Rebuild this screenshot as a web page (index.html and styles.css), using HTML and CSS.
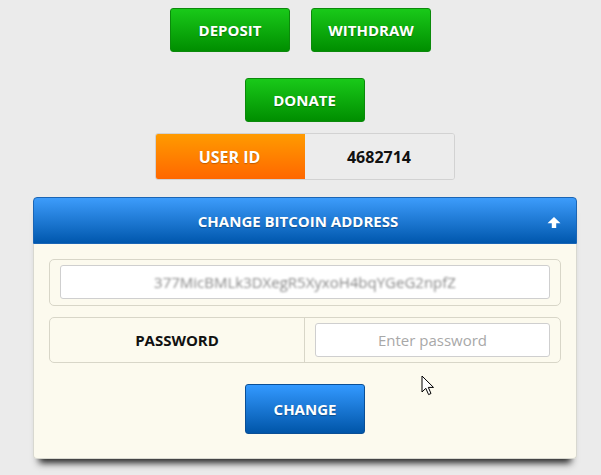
FILE: index.html
```html
<!DOCTYPE html>
<html>
<head>
<meta charset="utf-8">
<link rel="stylesheet" href="styles.css">
</head>
<body>
<div class="page">
  <div class="row top-row">
    <button class="btn green">DEPOSIT</button>
    <button class="btn green">WITHDRAW</button>
  </div>
  <div class="row donate-row">
    <button class="btn green">DONATE</button>
  </div>
  <div class="row user-row">
    <div class="userid">
      <div class="uid-label">USER ID</div>
      <div class="uid-value">4682714</div>
    </div>
  </div>
  <div class="panel">
    <div class="panel-head">
      <span class="panel-title">CHANGE BITCOIN ADDRESS</span>
      <svg class="arrow" width="14" height="11" viewBox="0 0 14 11"><path d="M7 0 L13.5 6.2 L9.2 6.2 L9.2 11 L4.8 11 L4.8 6.2 L0.5 6.2 Z" fill="#fff"/></svg>
    </div>
    <div class="panel-body">
      <div class="group">
        <div class="field addr"><span class="blurred">377MicBMLk3DXegR5XyxoH4bqYGeG2npfZ</span></div>
      </div>
      <div class="group pw">
        <div class="pw-label">PASSWORD</div>
        <div class="pw-cell"><div class="field pwfield">Enter password</div></div>
      </div>
      <div class="row change-row">
        <button class="btn blue">CHANGE</button>
      </div>
    </div>
  </div>
  <svg class="cursor" width="14" height="22" viewBox="0 0 14 22"><path d="M1 1 L1 17 L4.8 13.3 L7.6 19.6 L10 18.5 L7.3 12.4 L12.5 12.4 Z" fill="#fff" stroke="#000" stroke-width="1" stroke-linejoin="miter"/></svg>
</div>
</body>
</html>
```
FILE: styles.css
```css
* { box-sizing: border-box; }
html, body { margin: 0; padding: 0; }
body {
  background: #ebebeb;
  font-family: "Open Sans", "Noto Sans", sans-serif;
  width: 601px;
  height: 475px;
  overflow: hidden;
}
.page {
  position: relative;
  padding-top: 8px;
}
.row {
  display: flex;
  justify-content: center;
}
.top-row {
  gap: 21px;
}
.donate-row {
  margin-top: 26px;
  padding-left: 8px;
}
.user-row {
  margin-top: 11px;
  padding-left: 8px;
}
.btn {
  width: 120px;
  height: 44px;
  border-radius: 3px;
  font-family: "Open Sans", "Noto Sans", sans-serif;
  font-weight: 700;
  font-size: 15px;
  color: #fff;
  text-shadow: 0 1px 1px rgba(0,0,0,0.3);
  padding: 0;
  cursor: pointer;
}
.green {
  background: linear-gradient(#19c919, #008e00);
  border: 1px solid #0b8a0b;
}
.blue {
  width: 120px;
  height: 50px;
  background: linear-gradient(#3399ff, #0055a8);
  border: 1px solid #0a4f96;
}
.userid {
  display: flex;
  width: 300px;
  height: 47px;
  border-radius: 3px;
  overflow: hidden;
  border: 1px solid #d2d2d2;
}
.uid-label {
  width: 150px;
  margin: -1px 0 -1px -1px;
  background: linear-gradient(#ff9c00, #ff6600);
  color: #fff;
  font-weight: 700;
  font-size: 16px;
  display: flex;
  align-items: center;
  justify-content: center;
  text-shadow: 0 1px 1px rgba(0,0,0,0.25);
}
.uid-value {
  flex: 1;
  background: #ececec;
  color: #111;
  font-weight: 700;
  font-size: 16px;
  display: flex;
  align-items: center;
  justify-content: center;
}
.panel {
  margin: 17px 0 0 33px;
  width: 544px;
  border-radius: 4px;
  box-shadow: 0 10px 7px -6px rgba(0,0,0,0.85);
}
.panel-head {
  position: relative;
  height: 47px;
  background: linear-gradient(#3d9cfb, #0057ad);
  border: 1px solid #1a65b5;
  border-radius: 4px 4px 0 0;
  display: flex;
  align-items: center;
  justify-content: center;
  padding-right: 14px;
}
.panel-title {
  color: #fff;
  font-weight: 700;
  font-size: 15px;
  text-shadow: 0 1px 1px rgba(0,0,0,0.3);
}
.arrow {
  position: absolute;
  left: 513px;
  top: 19px;
}
.panel-body {
  background: #fcfaee;
  border: 1px solid #d8d8d0;
  border-top: none;
  border-radius: 0 0 4px 4px;
  padding: 15px 15px 24px;
}
.group {
  border: 1px solid #d8d6c8;
  border-radius: 5px;
  padding: 5px 10px 6px;
}
.field {
  height: 34px;
  background: #fff;
  border: 1px solid #cfcfcf;
  border-radius: 3px;
  display: flex;
  align-items: center;
  justify-content: center;
  font-size: 14px;
}
.blurred {
  color: #8a8a8a;
  filter: blur(1px);
  font-size: 15px;
  letter-spacing: 0;
}
.pw {
  margin-top: 11px;
  display: flex;
  padding: 0;
  height: 46px;
}
.pw-label {
  width: 255px;
  border-right: 1px solid #d8d6c8;
  display: flex;
  align-items: center;
  justify-content: center;
  font-weight: 700;
  font-size: 15px;
  color: #111;
}
.pw-cell {
  flex: 1;
  padding: 5px 10px 6px 10px;
}
.pwfield {
  color: #a8a8a8;
  font-size: 15px;
}
.change-row {
  margin-top: 21px;
}
.cursor {
  position: absolute;
  left: 421px;
  top: 375px;
}
```
